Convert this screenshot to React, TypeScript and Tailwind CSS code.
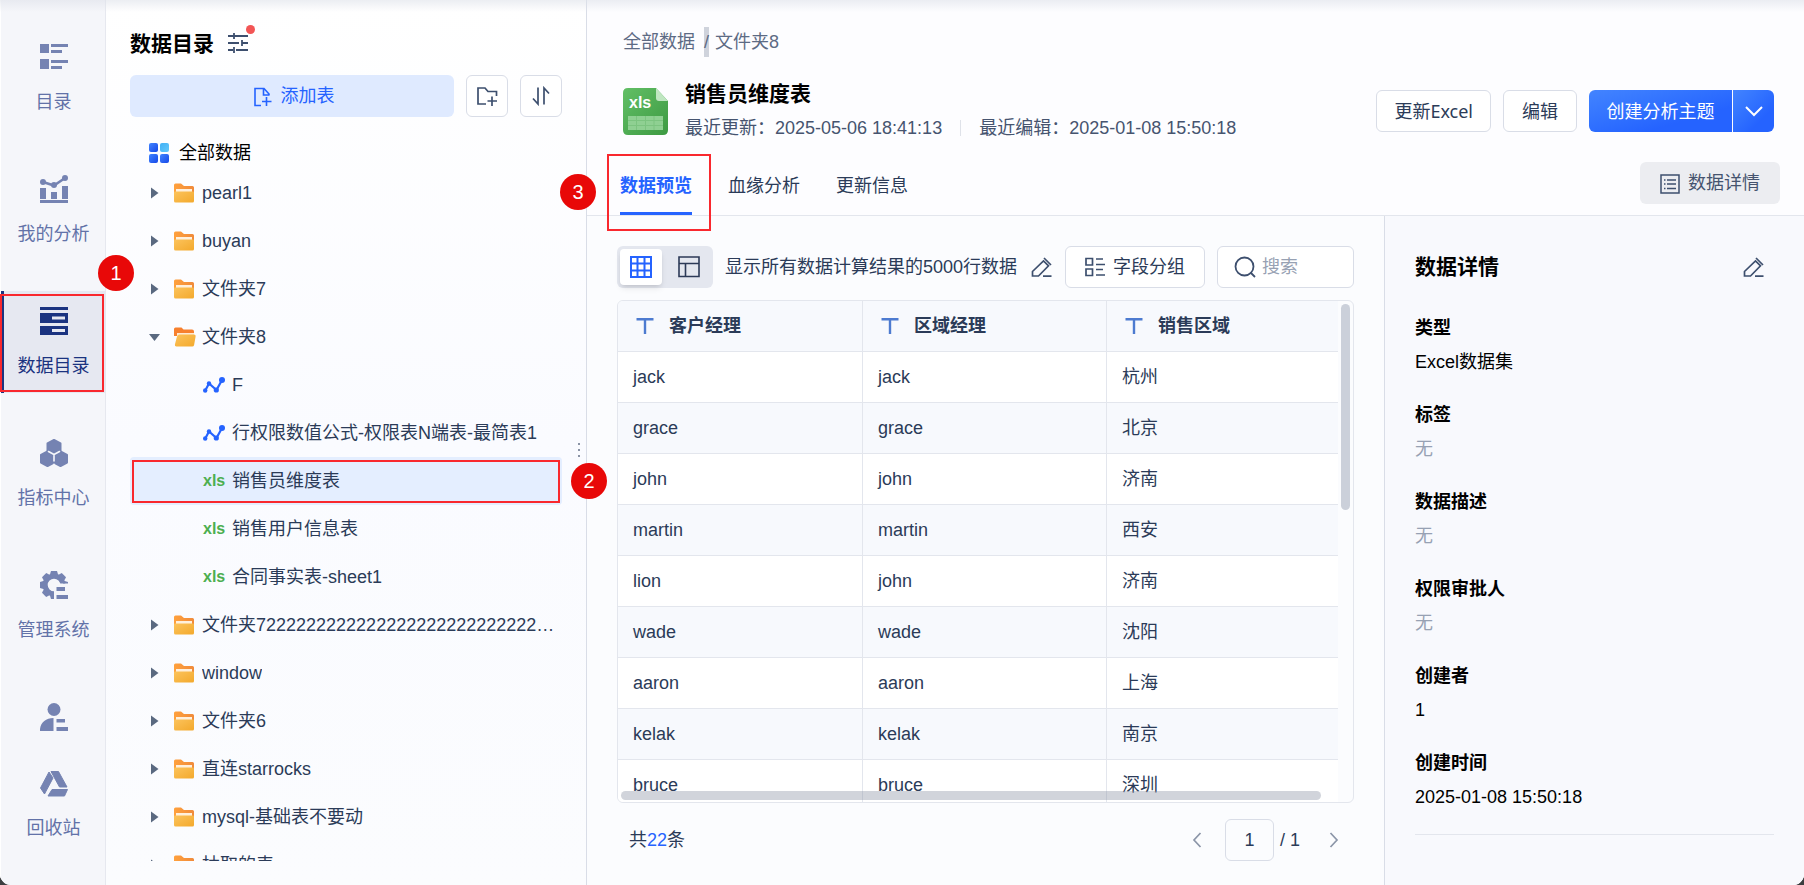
import type { ReactNode } from 'react';

/* ---------- icons ---------- */

const CatalogIcon = () => (
  <svg width="28" height="28" viewBox="0 0 28 28" fill="currentColor" aria-hidden="true">
    <path d="M0 1h9v9H0zM11 1h17v3H11zM11 7h11v3H11zM0 16h9v10H0zM11 17h17v3H11zM11 23h11v3H11z" />
  </svg>
);
const AnalysisIcon = () => (
  <svg width="28" height="28" viewBox="0 0 28 28" fill="currentColor" aria-hidden="true">
    <path d="M0 13h6v11H0zM11 17h6v7h-6zM22 11h6v13h-6zM0 25h28v3H0z" />
    <path d="M3 7l11 3.500L25 3" fill="none" stroke="currentColor" strokeWidth="2.500" />
    <circle cx="3" cy="7" r="3" />
    <circle cx="14" cy="10" r="3" />
    <circle cx="25" cy="3" r="3" />
  </svg>
);
const DataIcon = () => (
  <svg width="28" height="28" viewBox="0 0 28 28" fill="currentColor" fillRule="evenodd" aria-hidden="true">
    <path d="M0 0h28v3H0zM0 6h28v10H0zM12 9.500v3h13v-3zM0 19h28v9H0zM12 22v3h13v-3z" />
  </svg>
);
const MetricIcon = () => (
  <svg width="28" height="28" viewBox="0 0 28 28" fill="currentColor" stroke="currentColor" strokeWidth="2" strokeLinejoin="round" aria-hidden="true">
    <path d="M14 1l6.500 3.500v8L14 17l-6.500-4.500v-8z" />
    <path d="M7.500 12.500L14 16v7.500L7.500 27 1 23.500V16z" />
    <path d="M20.500 12.500L27 16v7.500L20.500 27 14 23.500V16z" />
    <path d="M8.500 12.500l5.500 3 5.500-3M14 15.500V22" fill="none" stroke="#f5f6fa" strokeWidth="1.600" strokeLinecap="round" />
    <path d="M14 24.500V28" fill="none" stroke="#f5f6fa" strokeWidth="1" />
  </svg>
);
const GearIcon = () => (
  <svg width="28" height="28" viewBox="0 0 28 28" fill="currentColor" aria-hidden="true">
    <clipPath id="gear-clip">
      <path d="M0 0h28v12.500H20L14 14v14H0z" />
    </clipPath>
    <g clipPath="url(#gear-clip)">
      <circle cx="14" cy="14" r="8.800" fill="none" stroke="currentColor" strokeWidth="5" />
      {[0, 45, 90, 135, 180, 225, 270, 315].map((a) => (
        <path key={a} d="M11 0h6l1.500 5h-9z" transform={`rotate(${a} 14 14)`} />
      ))}
    </g>
    <path d="M16.500 16H25v4h-8.500zM16.500 24H28v4H16.500z" />
  </svg>
);
const UserIcon = () => (
  <svg width="28" height="28" viewBox="0 0 28 28" fill="currentColor" aria-hidden="true">
    <circle cx="14" cy="6.500" r="6.500" />
    <path d="M0 28v-2C1 19 6 15 13.500 15v13zM16.500 16H25v3.500h-8.500zM16.500 24H28v4H16.500z" />
  </svg>
);
const RecycleIcon = () => (
  <svg width="28" height="28" viewBox="0 0 28 28" fill="currentColor" stroke="currentColor" strokeLinejoin="round" aria-hidden="true">
    <path d="M9 3l4 6L4.500 25 .500 19zM11 2.500h7.500L27 18h-7.500zM12 20.500h15.500L24.500 27H8z" />
  </svg>
);
const FilterIcon = () => (
  <svg width="20" height="20" viewBox="0 0 20 20" fill="none" stroke="#3d4f6e" strokeWidth="1.800" aria-hidden="true">
    <path d="M0 3h20M0 10h11M14 10h6M0 17h5M8 17h12M6 0v6M14 7v6M6 14v6" />
  </svg>
);
const FileAddIcon = () => (
  <svg width="20" height="20" viewBox="0 0 20 20" fill="none" stroke="currentColor" strokeWidth="1.600" aria-hidden="true">
    <path d="M8 18.500H2v-17h9l5 5.500v1.500M10.500 1.500V8H16M13.500 10v9M9 14.500h9.500" />
  </svg>
);
const FolderAddIcon = () => (
  <svg width="22" height="20" viewBox="0 0 22 20" fill="none" stroke="#3d4f6e" strokeWidth="1.700" aria-hidden="true">
    <path d="M10 18H2V2h7l3 3.500h8.500V10M16 10.500V20M11.500 15h9.500" />
  </svg>
);
const SortIcon = () => (
  <svg width="20" height="20" viewBox="0 0 20 20" fill="none" stroke="#3d4f6e" strokeWidth="1.700" aria-hidden="true">
    <path d="M7 1.500V18L2 12.500M13 18.500V2l5 5.500" />
  </svg>
);
const GridDots = () => (
  <svg width="20" height="20" viewBox="0 0 20 20" aria-hidden="true">
    <defs>
      <linearGradient id="tile-blue" x1="0" y1="0" x2="1" y2="1">
        <stop offset="0" stopColor="#4285ff" />
        <stop offset="1" stopColor="#1648e8" />
      </linearGradient>
      <linearGradient id="tile-sky" x1="0" y1="0" x2="1" y2="1">
        <stop offset="0" stopColor="#41b0f5" />
        <stop offset="1" stopColor="#62c8fb" />
      </linearGradient>
    </defs>
    <rect x="0" y="0" width="9" height="9" rx="2" fill="url(#tile-blue)" />
    <rect x="11" y="0" width="9" height="9" rx="2" fill="url(#tile-sky)" />
    <rect x="0" y="11" width="9" height="9" rx="2" fill="url(#tile-blue)" />
    <rect x="11" y="11" width="9" height="9" rx="2" fill="url(#tile-blue)" />
  </svg>
);
const FolderDefs = () => (
  <svg width="0" height="0" className="absolute" aria-hidden="true">
    <defs>
      <linearGradient id="folder-front" x1="0" y1="0" x2="1" y2="1">
        <stop offset="0" stopColor="#fcc35c" />
        <stop offset="1" stopColor="#f3a92c" />
      </linearGradient>
      <linearGradient id="folder-back" x1="0" y1="0" x2="1" y2="0">
        <stop offset="0" stopColor="#ffa13d" />
        <stop offset="1" stopColor="#f08a3a" />
      </linearGradient>
    </defs>
  </svg>
);
const FolderIcon = ({ open = false }: { open?: boolean }) =>
  open ? (
    <svg width="22" height="20" viewBox="0 0 22 20" className="shrink-0" aria-hidden="true">
      <path d="M0 16V2q0-1.500 1.500-1.500h6L9.500 2.500H18q2 0 2 2V9H0z" fill="#f7802e" />
      <path d="M3 6h17v3H3z" fill="#ffe9d2" />
      <path d="M5.500 7.500H20q2 0 1.600 2l-1.500 8.500q-.300 1.500-2 1.500H2.500q-2 0-1.600-2L3 9.500q.500-2 2.500-2z" fill="url(#folder-front)" />
    </svg>
  ) : (
    <svg width="22" height="20" viewBox="0 0 22 20" className="shrink-0" aria-hidden="true">
      <path d="M0 9V2Q0 .500 1.500.500H7l3 2.500h8.500Q20 3 20 4.500V10H0z" fill="url(#folder-back)" />
      <path d="M2 6h16v3H2z" fill="#fff0dc" />
      <path d="M0 9.500Q0 8.500 1 8.500h18q1 0 1 1V18q0 1.500-1.500 1.500h-17Q0 19.500 0 18z" fill="url(#folder-front)" />
    </svg>
  );
const FlowIcon = () => (
  <svg width="22" height="16" viewBox="0 0 22 16" fill="#2563ff" className="shrink-0" aria-hidden="true">
    <path d="M2 14L6 6.500 13.500 13 19 3" fill="none" stroke="#2563ff" strokeWidth="2.200" />
    <circle cx="2.200" cy="13.500" r="2.200" />
    <circle cx="6" cy="6.500" r="2.200" />
    <circle cx="13.300" cy="13" r="2.600" />
    <circle cx="19" cy="3" r="3" />
  </svg>
);
const XlsIcon = () => (
  <span className="w-[22px] shrink-0 text-center text-[16px] leading-5 font-bold text-[#4caf50]">xls</span>
);
const XlsFile = () => (
  <span className="relative block h-[47px] w-[45px] shrink-0">
    <svg width="45" height="47" viewBox="0 0 45 47" aria-hidden="true">
      <defs>
        <linearGradient id="xls-body" x1="0" y1="0" x2="1" y2="1">
          <stop offset="0" stopColor="#62bf66" />
          <stop offset="1" stopColor="#3d9a42" />
        </linearGradient>
      </defs>
      <path d="M5 0h28l12 13v29q0 5-5 5H5q-5 0-5-5V5q0-5 5-5z" fill="url(#xls-body)" />
      <path d="M33 0l12 13H36q-3 0-3-3z" fill="#bfe6c1" />
      <path d="M5 28h35v14H5z" fill="#8fd092" />
      <path d="M5 32.500h35M5 37.500h35M13.500 28v14M22.500 28v14M31 28v14" stroke="#7cc480" />
    </svg>
    <span className="absolute top-[5px] left-[6px] text-[16px] leading-5 font-bold text-white">xls</span>
  </span>
);
const EditIcon = () => (
  <svg width="21" height="21" viewBox="0 0 21 21" fill="none" stroke="#3d4f6e" strokeWidth="1.700" aria-hidden="true">
    <path d="M1.500 19v-4.500L12.500 4l5 4.800L7.500 19zM13 1l7 7M12 19.200h8.500" />
  </svg>
);
const GridIcon = () => (
  <svg width="22" height="22" viewBox="0 0 22 22" fill="none" stroke="#2563ff" strokeWidth="2" aria-hidden="true">
    <path d="M1 1h20v20H1zM1 7.500h20M1 14.500h20M7.500 1v20M14.500 1v20" />
  </svg>
);
const LayoutIcon = () => (
  <svg width="22" height="22" viewBox="0 0 22 22" fill="none" stroke="#2c3a57" strokeWidth="1.600" aria-hidden="true">
    <path d="M1 1h20v19.500H1zM1 7.500h20M7.500 7.500v13" />
  </svg>
);
const GroupIcon = () => (
  <svg width="20" height="20" viewBox="0 0 20 20" fill="none" stroke="#3d4f6e" strokeWidth="1.700" aria-hidden="true">
    <path d="M1 1.500h6.500V8H1zM1 12h6.500v6.500H1zM11 2h7M11 7.500h9M11 12.500h7M11 18h9" />
  </svg>
);
const SearchIcon = () => (
  <svg width="22" height="22" viewBox="0 0 22 22" fill="none" stroke="#3d4f6e" strokeWidth="1.800" className="shrink-0" aria-hidden="true">
    <circle cx="10.500" cy="10.500" r="9" />
    <path d="M16.500 16.500l4.500 4.500" />
  </svg>
);
const DetailIcon = () => (
  <svg width="20" height="20" viewBox="0 0 20 20" fill="none" stroke="#3d4f6e" strokeWidth="1.500" aria-hidden="true">
    <path d="M1 1h18v18H1zM7 6h9M7 10h9M7 14.500h9M4 6h1.500M4 10h1.500M4 14.500h1.500" />
  </svg>
);
const TypeIcon = () => (
  <svg width="18" height="16" viewBox="0 0 18 16" fill="#4d7bd0" aria-hidden="true">
    <path d="M.500 0h17v2.400h-7.300V16H7.800V2.400H.500z" />
  </svg>
);

/* ---------- data ---------- */

const NAV: { label: string; icon: ReactNode; active?: boolean }[] = [
  { label: '目录', icon: <CatalogIcon /> },
  { label: '我的分析', icon: <AnalysisIcon /> },
  { label: '数据目录', icon: <DataIcon />, active: true },
  { label: '指标中心', icon: <MetricIcon /> },
  { label: '管理系统', icon: <GearIcon /> },
];

type Node = { name: string; kind: 'folder' | 'open' | 'flow' | 'xls'; selected?: boolean };
const TREE: Node[] = [
  { name: 'pearl1', kind: 'folder' },
  { name: 'buyan', kind: 'folder' },
  { name: '文件夹7', kind: 'folder' },
  { name: '文件夹8', kind: 'open' },
  { name: 'F', kind: 'flow' },
  { name: '行权限数值公式-权限表N端表-最简表1', kind: 'flow' },
  { name: '销售员维度表', kind: 'xls', selected: true },
  { name: '销售用户信息表', kind: 'xls' },
  { name: '合同事实表-sheet1', kind: 'xls' },
  { name: '文件夹722222222222222222222222222222222222', kind: 'folder' },
  { name: 'window', kind: 'folder' },
  { name: '文件夹6', kind: 'folder' },
  { name: '直连starrocks', kind: 'folder' },
  { name: 'mysql-基础表不要动', kind: 'folder' },
  { name: '抽取的表', kind: 'folder' },
];

const COLUMNS = ['客户经理', '区域经理', '销售区域'];
const ROWS = [
  ['jack', 'jack', '杭州'],
  ['grace', 'grace', '北京'],
  ['john', 'john', '济南'],
  ['martin', 'martin', '西安'],
  ['lion', 'john', '济南'],
  ['wade', 'wade', '沈阳'],
  ['aaron', 'aaron', '上海'],
  ['kelak', 'kelak', '南京'],
  ['bruce', 'bruce', '深圳'],
];

const DETAILS = [
  { label: '类型', value: 'Excel数据集' },
  { label: '标签', value: '无', empty: true },
  { label: '数据描述', value: '无', empty: true },
  { label: '权限审批人', value: '无', empty: true },
  { label: '创建者', value: '1' },
  { label: '创建时间', value: '2025-01-08 15:50:18' },
];

/* ---------- parts ---------- */

function NavItem({ label, icon, active }: { label: string; icon: ReactNode; active?: boolean }) {
  return (
    <a
      href="#"
      className={
        'flex h-[102px] shrink-0 flex-col items-center gap-[18px] border-l-[3px] pt-4 pr-[2px] ' +
        (active ? 'border-[#1b3380] bg-[#e6e8f1] text-[#1b3380]' : 'border-transparent text-[#7583b2]')
      }
    >
      {icon}
      <span className={'leading-[27px] ' + (active ? '' : 'text-[#6272a8]')}>{label}</span>
    </a>
  );
}

function NavRail() {
  return (
    <nav className="flex w-[106px] shrink-0 flex-col justify-between border-r border-l border-r-[#e6e8ef] border-l-white bg-[#f5f6fa] pt-[27px] pb-[30px]">
      <div className="flex flex-col gap-[30px]">
        {NAV.map((n) => (
          <NavItem key={n.label} {...n} />
        ))}
      </div>
      <div className="flex flex-col gap-[22px] text-[#7583b2]">
        <a href="#" aria-label="个人中心" className="flex justify-center pl-px">
          <UserIcon />
        </a>
        <NavItem label="回收站" icon={<RecycleIcon />} />
      </div>
    </nav>
  );
}

function TreeRow({ name, kind, selected }: Node) {
  const isFolder = kind === 'folder' || kind === 'open';
  return (
    <li
      className={
        'flex h-12 items-center rounded pr-1 ' +
        (isFolder ? 'pl-[19px] ' : 'pl-[73px] ') +
        (selected ? 'bg-[#e4eeff]' : '')
      }
    >
      {isFolder && (
        <svg width="12" height="12" viewBox="0 0 12 12" fill="#5a6980" className="mr-[13px] shrink-0" aria-hidden="true">
          {kind === 'open' ? <path d="M0 3h11L5.500 10z" /> : <path d="M2 .500v11L9.500 6z" />}
        </svg>
      )}
      {isFolder && <FolderIcon open={kind === 'open'} />}
      {kind === 'flow' && <FlowIcon />}
      {kind === 'xls' && <XlsIcon />}
      <span className={'truncate leading-[27px] text-[#2b3b58] ' + (isFolder ? 'ml-[6px]' : 'ml-[7px]')}>{name}</span>
    </li>
  );
}

function TreePanel() {
  return (
    <aside className="relative flex w-[481px] shrink-0 flex-col border-r border-[#d9dde7] bg-gradient-to-b from-white via-[#fafbff] to-[#fbfcfe] px-6 pt-[27px] pb-6">
      <header className="flex h-8 items-center gap-[14px]">
        <h1 className="text-[21px] font-bold text-black">数据目录</h1>
        <button type="button" aria-label="筛选" className="relative">
          <FilterIcon />
          <span className="absolute -top-2 left-[18px] size-[9px] rounded-full bg-[#f25555]" />
        </button>
      </header>
      <div className="mt-4 flex gap-3">
        <button type="button" className="flex h-[42px] flex-1 items-center justify-center gap-2 rounded-md bg-[#dfeaff] pt-px pl-[3px] text-[#2563ff]">
          <FileAddIcon />
          添加表
        </button>
        <button type="button" aria-label="新建文件夹" className="flex size-[42px] items-center justify-center rounded-md border border-[#d9dde7] bg-white">
          <FolderAddIcon />
        </button>
        <button type="button" aria-label="排序" className="flex size-[42px] items-center justify-center rounded-md border border-[#d9dde7] bg-white">
          <SortIcon />
        </button>
      </div>
      <div className="mt-5 flex h-8 shrink-0 items-center gap-[10px] pl-[19px] text-black">
        <GridDots />
        全部数据
      </div>
      <ul className="min-h-0 flex-1 overflow-hidden">
        {TREE.map((n) => (
          <TreeRow key={n.name} {...n} />
        ))}
      </ul>
      <span className="absolute top-1/2 right-[6px] flex flex-col gap-1">
        <i className="size-[2px] bg-[#8a93a5]" />
        <i className="size-[2px] bg-[#8a93a5]" />
        <i className="size-[2px] bg-[#8a93a5]" />
      </span>
    </aside>
  );
}

function PageHeader() {
  return (
    <header className="border-b border-[#e3e6ed] pt-[27px]">
      <div className="flex h-[30px] items-center px-9 text-[#5d6b84]">
        <a href="#">全部数据</a>
        <span className="ml-[9px] w-[5px] bg-[#cfd3dc] leading-[30px]">/</span>
        <a href="#" className="ml-[6px]">文件夹8</a>
      </div>
      <div className="mt-[21px] flex h-[66px] items-center pr-[30px] pl-9">
        <XlsFile />
        <div className="ml-[17px]">
          <h2 className="text-[21px] leading-8 font-bold text-black">销售员维度表</h2>
          <div className="mt-[2px] flex items-center leading-[32px] whitespace-nowrap text-[#46546f]">
            <span>最近更新：2025-05-06 18:41:13</span>
            <span className="mx-[18px] h-4 w-px bg-[#dfe2e9]" />
            <span>最近编辑：2025-01-08 15:50:18</span>
          </div>
        </div>
        <div className="ml-auto flex gap-3 font-['Noto_Sans','Noto_Sans_CJK_SC',sans-serif] whitespace-nowrap text-[#2b3b58]">
          <button type="button" className="h-[42px] rounded-md border border-[#d9dde7] bg-white px-[17px]">更新Excel</button>
          <button type="button" className="h-[42px] rounded-md border border-[#d9dde7] bg-white px-[18px]">编辑</button>
          <div className="flex gap-px text-white">
            <button type="button" className="h-[42px] w-[143px] rounded-l-md bg-gradient-to-br from-[#4384ff] to-[#2563ff] to-70%">创建分析主题</button>
            <button type="button" aria-label="更多" className="flex h-[42px] w-[41px] items-center justify-center rounded-r-md bg-gradient-to-br from-[#4384ff] to-[#2563ff] to-70%">
              <svg width="18" height="11" viewBox="0 0 18 11" fill="none" stroke="white" strokeWidth="2" aria-hidden="true">
                <path d="M1 1l8 8 8-8" />
              </svg>
            </button>
          </div>
        </div>
      </div>
      <div className="mt-[18px] flex justify-between pr-6 pl-[33px]">
        <div role="tablist" className="flex gap-9 text-[#2b3b58]">
          <button type="button" role="tab" aria-selected="true" className="h-[53px] border-b-[3px] border-[#2563ff] pb-[2px] font-bold text-[#2563ff]">数据预览</button>
          <button type="button" role="tab" aria-selected="false" className="h-[53px] pb-[5px]">血缘分析</button>
          <button type="button" role="tab" aria-selected="false" className="h-[53px] pb-[5px]">更新信息</button>
        </div>
        <button type="button" className="flex h-[42px] items-center gap-2 rounded-md bg-[#ecedf1] px-5 pt-px text-[#46546f]">
          <DetailIcon />
          数据详情
        </button>
      </div>
    </header>
  );
}

function Preview() {
  return (
    <section className="flex min-w-0 flex-1 flex-col bg-[#fbfcfe] px-[30px] pt-[30px] pb-6 text-[#2b3b58]">
      <div className="flex h-[42px] items-center gap-3 whitespace-nowrap">
        <div className="flex h-[42px] shrink-0 items-center gap-1 rounded-md bg-[#e4e7ef] px-[3px]">
          <button type="button" aria-label="表格" className="flex h-9 w-[42px] items-center justify-center rounded bg-white shadow-md">
            <GridIcon />
          </button>
          <button type="button" aria-label="布局" className="flex h-9 w-11 items-center justify-center pl-[2px]">
            <LayoutIcon />
          </button>
        </div>
        <span>显示所有数据计算结果的5000行数据</span>
        <button type="button" aria-label="编辑行数" className="shrink-0 pr-px pl-[2px]">
          <EditIcon />
        </button>
        <button type="button" className="flex h-[42px] w-[140px] shrink-0 items-center justify-center gap-2 rounded-md border border-[#d9dde7] bg-white">
          <GroupIcon />
          字段分组
        </button>
        <label className="flex h-[42px] min-w-0 flex-1 items-center gap-[6px] rounded-md border border-[#d9dde7] bg-white px-4">
          <SearchIcon />
          <input type="text" aria-label="搜索" placeholder="搜索" className="w-full min-w-0 outline-none placeholder:text-[#97a1b3]" />
        </label>
      </div>

      <div className="relative mt-3 min-h-0 flex-1 overflow-hidden rounded-md border border-[#e3e6ed] pr-[15px]">
        <table className="w-full table-fixed border-separate border-spacing-0 text-left">
          <thead>
            <tr className="bg-[#f7f9fd]">
              {COLUMNS.map((c) => (
                <th key={c} className="h-[51px] border-r border-b border-[#e3e6ed] py-0 pl-[18px] font-bold first:w-[245px] last:border-r-0 nth-2:w-[244px]">
                  <span className="flex items-center gap-[15px]">
                    <TypeIcon />
                    {c}
                  </span>
                </th>
              ))}
            </tr>
          </thead>
          <tbody>
            {ROWS.map((r) => (
              <tr key={r[0]} className="bg-white even:bg-[#f7f9fd]">
                {r.map((v, i) => (
                  <td key={i} className="h-[51px] border-r border-b border-[#e3e6ed] py-0 pl-[15px] last:border-r-0">
                    {v}
                  </td>
                ))}
              </tr>
            ))}
          </tbody>
        </table>
        <span className="absolute top-[3px] right-[3px] h-[206px] w-[9px] rounded-full bg-[#cbd0da]" />
        <span className="absolute right-8 bottom-[2px] left-[3px] h-[9px] rounded-full bg-[#8d94a5]/40" />
      </div>

      <footer className="mt-4 flex h-[42px] items-center pr-[15px] pl-3">
        <span>
          共<span className="text-[#2563ff]">22</span>条
        </span>
        <button type="button" aria-label="上一页" className="mr-[23px] ml-auto text-[#8b95a8]">
          <svg width="10" height="16" viewBox="0 0 10 16" fill="none" stroke="currentColor" strokeWidth="1.700" aria-hidden="true">
            <path d="M8.500 1L2 8l6.500 7" />
          </svg>
        </button>
        <input type="text" aria-label="页码" defaultValue="1" className="h-[42px] w-[49px] rounded-md border border-[#d9dde7] bg-transparent text-center outline-none" />
        <span className="ml-[6px]">/ 1</span>
        <button type="button" aria-label="下一页" className="ml-[29px] text-[#8b95a8]">
          <svg width="10" height="16" viewBox="0 0 10 16" fill="none" stroke="currentColor" strokeWidth="1.700" aria-hidden="true">
            <path d="M1.500 1L8 8l-6.500 7" />
          </svg>
        </button>
      </footer>
    </section>
  );
}

function DetailPanel() {
  return (
    <aside className="w-[420px] shrink-0 border-l border-[#d9dde7] bg-[#f8f9fd] pt-[35px] pr-[30px] pl-[30px] text-black">
      <div className="flex h-8 items-center justify-between pr-[10px]">
        <h3 className="text-[21px] leading-8 font-bold">数据详情</h3>
        <button type="button" aria-label="编辑详情">
          <EditIcon />
        </button>
      </div>
      <dl className="mt-8 flex flex-col gap-[26px] border-b border-[#e3e6ed] pb-[23px]">
        {DETAILS.map((d) => (
          <div key={d.label} className="flex flex-col gap-[7px] leading-[27px]">
            <dt className="font-bold">{d.label}</dt>
            <dd className={d.empty ? 'text-[#97a1b3]' : ''}>{d.value}</dd>
          </div>
        ))}
      </dl>
    </aside>
  );
}

const BADGE =
  'absolute flex size-9 items-center justify-center rounded-full bg-[#e80808] text-[20px] text-white ';
const MARK = 'pointer-events-none absolute border-2 border-[#f9282e] ';

export default function App() {
  return (
    <div className="h-screen bg-[#3c3e40] font-['Liberation_Sans','Noto_Sans_CJK_SC',sans-serif] text-[18px] leading-[27px]">
      <FolderDefs />
      <div className="relative flex h-full overflow-hidden rounded-b-[11px] bg-white">
        <NavRail />
        <TreePanel />
        <main className="flex min-w-0 flex-1 flex-col bg-[#fdfdff]">
          <PageHeader />
          <div className="flex min-h-0 flex-1">
            <Preview />
            <DetailPanel />
          </div>
        </main>

        <div className="pointer-events-none absolute inset-x-0 top-0 h-3 bg-gradient-to-b from-[#dfe2ea]/60 to-transparent" />

        <div className={MARK + 'top-[294px] left-0 h-[98px] w-[104px]'} />
        <div className={MARK + 'top-[460px] left-[132px] h-[43px] w-[428px]'} />
        <div className={MARK + 'top-[154px] left-[607px] h-[77px] w-[104px]'} />
        <span className={BADGE + 'top-[255px] left-[98px]'}>1</span>
        <span className={BADGE + 'top-[463px] left-[571px]'}>2</span>
        <span className={BADGE + 'top-[174px] left-[560px]'}>3</span>
      </div>
    </div>
  );
}
